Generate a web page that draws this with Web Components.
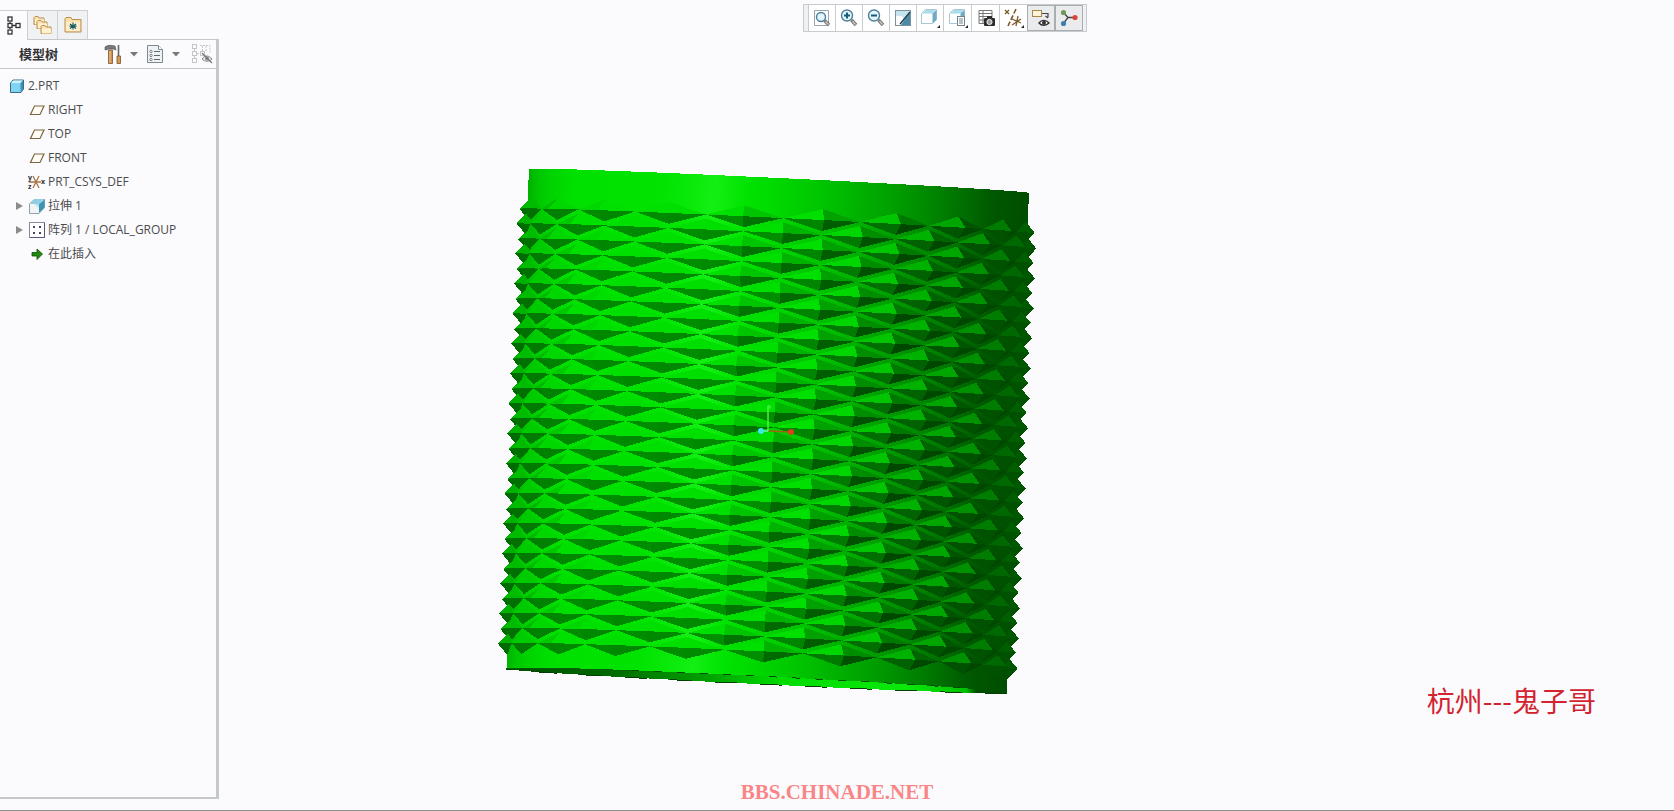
<!DOCTYPE html>
<html lang="zh-CN">
<head>
<meta charset="utf-8">
<title>2.PRT</title>
<style>
html, body { margin: 0; height: 100%; }
body { background: #fbfbfe; color: #4c4c4c; font: 12px/24px "Open Sans", "Noto Sans CJK SC", sans-serif; }
</style>
</head>
<body>
<cad-app>
  <model-panel slot="panel" heading="模型树">
    <tree-node icon="part" root>2.PRT</tree-node>
    <tree-node icon="plane">RIGHT</tree-node>
    <tree-node icon="plane">TOP</tree-node>
    <tree-node icon="plane">FRONT</tree-node>
    <tree-node icon="csys">PRT_CSYS_DEF</tree-node>
    <tree-node icon="extrude" expandable>拉伸 1</tree-node>
    <tree-node icon="pattern" expandable>阵列 1 / LOCAL_GROUP</tree-node>
    <tree-node icon="insert">在此插入</tree-node>
  </model-panel>
  <model-view slot="view">
    <view-toolbar></view-toolbar>
    <span slot="note">杭州---鬼子哥</span>
  </model-view>
  <span slot="mark">BBS.CHINADE.NET</span>
</cad-app>

<script>
const lens = (x, y, r, inner) => `
  <path d="M${x + r - 1} ${y + r - 1}L17 17" stroke="#777" stroke-width="3.4"/>
  <path d="M${x + r} ${y + r}L16.5 16.5" stroke="#d4c3bb" stroke-width="1.4"/>
  <circle cx="${x}" cy="${y}" r="${r}" fill="#e6f5fb" stroke="#4c7f9c" stroke-width="1.4"/>${inner}`;
const smallCube = `<path d="M1.500 5.500L5.500 1.500H16.500V11.500L12.500 15.500H1.500z" fill="#fff" stroke="#a9c6d3"/>
  <path d="M2 5.500L6 2H16L12.500 5.500z" fill="#a9dcec"/><path d="M12.500 5.500L16.500 2V12L12.500 15.500z" fill="#6fabc4"/>`;
const corner = `<path d="M20 17v3h-3z" fill="#222"/>`;
const folder = (x, y) => `<path d="M${x} ${y + 8}V${y + 1}l1-1h3l1 1.500h5V${y + 8}z" fill="#fbe3b4" stroke="#b98d4a"/><path d="M${x + 1} ${y + 3}h9v5h-9z" fill="#fff0cf"/>`;
const ICONS = {
  tree: [18, `<g fill="#fff" stroke="#333" stroke-width="1.300"><path fill="none" d="M5 6v7M7 9.500h5"/><rect x="3" y="1" width="4" height="4"/><rect x="3" y="7.500" width="4" height="4"/><rect x="3" y="14" width="4" height="4"/><rect x="11" y="7.500" width="4" height="4"/></g>`],
  folders: [20, folder(1, 1.5) + folder(4, 5.5) + folder(8, 10.5)],
  favorite: [20, `<path d="M2 17V4l1-1.500h5l1 2h9V17z" fill="#fbe0ad" stroke="#b98d4a"/><path d="M3 7h14v9H3z" fill="#ffecc9"/><path d="M10 7.500v7M7 9l6 4.500M13 9l-6 4.500M6.500 11.200h7" stroke="#1e5f66" stroke-width="1.200"/>`],
  tools: [20, `<path d="M2 3c2-2 6-2 10-1l1 4-3-1H6L2 6z" fill="#74797e" stroke="#4c5054" stroke-width=".6"/><path d="M5.500 6h4v13.500h-4z" fill="#c98f4e" stroke="#7c5429" stroke-width=".8"/><path d="M7 7v12" stroke="#f0c88f"/><path d="M15.500 1v11" stroke="#666" stroke-width="1.600"/><path d="M14 12h3.500v7.500H14z" fill="#d39a56" stroke="#7c5429" stroke-width=".8"/>`],
  list: [20, `<path d="M2.500 1.500h11l4 4v13h-15z" fill="#eef2f4" stroke="#7f8a90"/><path d="M13.500 1.500v4h4" fill="#fff" stroke="#7f8a90"/><path d="M9 7.500h6M9 11.500h6M9 15.500h6" stroke="#5d6a72"/><g fill="#fff" stroke="#5d6a72" stroke-width=".8"><circle cx="6" cy="7.500" r="1.200"/><circle cx="6" cy="11.500" r="1.200"/><circle cx="6" cy="15.500" r="1.200"/></g>`],
  hide: [22, `<g fill="none" stroke="#c3c5c8"><rect x="1.500" y="1.500" width="4" height="4"/><rect x="1.500" y="8.500" width="4" height="4"/><rect x="1.500" y="15.500" width="4" height="4"/><rect x="9.500" y="8.500" width="4" height="4"/><path d="M6 10.500h3M3.500 6v2M3.500 13v2M9 2.500h10v8M11.500 3v5M15 3v5" stroke-dasharray="2 1"/></g><path d="M11 16c2.500-4 7-4 10 0-3 3-7 3-10 0z" fill="#e4e4e6" stroke="#8a8d90"/><circle cx="16" cy="15.500" r="2" fill="#8a8d90"/><path d="M11 10l10 10" stroke="#777" stroke-width="1.200"/>`],
  part: [16, `<path d="M1.500 5L4 2h10.500v9L12 14.500H1.500z" fill="#7fd6f2" stroke="#386c84"/><path d="M2 5L4.500 2.500H14L11.500 5z" fill="#d3f3fc"/><path d="M11.500 5L14 2.500V11l-2.500 3z" fill="#3f90b4"/>`],
  plane: [16, `<path d="M5.500 4h9.500l-4 8.500H1.500z" fill="#fffdf6" stroke="#7c6540" stroke-width="1.200"/>`],
  csys: [20, `<path d="M2 10h12M6 4l6 12M12 4L6 16" stroke="#a8754a" stroke-width="1.300"/><g font-family="Open Sans" font-size="7" font-weight="700" fill="#333"><text x="1" y="8">y</text><text x="14" y="12">x</text><text x="1" y="17">z</text></g>`],
  extrude: [18, `<path d="M1.500 7L6 2.500h10.500v8L11 16.500H1.500z" fill="#f0f4f6" stroke="#8fa3ad"/><path d="M2 7L6.500 2H16l-5 5z" fill="#8fcfe6"/><path d="M11 7l5.500-4.500v8L11 16z" fill="#3f93b6"/><path d="M6 7h5v4z" fill="#b9e2f0"/>`],
  pattern: [18, `<rect x="1.500" y="1.500" width="15" height="15" fill="#fff" stroke="#8d88a0"/><path d="M16.500 2v14.500H2" stroke="#5d5377"/><g fill="#4c3f6d"><path d="M5 5h2v2H5zM11 5h2v2h-2zM5 11h2v2H5zM11 11h2v2h-2z"/></g>`],
  insert: [16, `<path d="M3 6.500h5V3l5.500 5L8 13.500V10H3z" fill="#1f8a0b" stroke="#0d4d05" stroke-width=".8"/>`],
  fit: [20, `<path d="M2.500 2.500h14v15h-14z" fill="#fff" stroke="#9aa4a9"/>` + lens(9, 9, 4.5, '')],
  zoomin: [20, lens(8, 7.5, 5.5, `<path d="M8 4.500v6M5 7.500h6" stroke="#155d80" stroke-width="2"/>`)],
  zoomout: [20, lens(8, 7.5, 5.5, `<path d="M5 7.500h6" stroke="#155d80" stroke-width="2"/>`)],
  repaint: [20, `<rect x="2.500" y="2.500" width="15" height="15" fill="#dfeff5" stroke="#7a929d"/><path d="M3 3h14v2L8 17H3z" fill="#c6e3ee"/><path d="M3 8c4-1 7 0 8 3l-4 6H3z" fill="#fff"/><path d="M17 4v13H8z" fill="#4d8aa6"/><path d="M7 16l10-12" stroke="#173c50" stroke-width="1.300"/>`],
  shade: [20, smallCube + corner],
  saved: [20, smallCube + `<rect x="9.500" y="8.500" width="7" height="9" fill="#fff" stroke="#71838c"/><path d="M11 11h4M11 13h4M11 15h4" stroke="#71838c"/>` + corner],
  manager: [20, `<path d="M3 2.500h13v13H3zM3 5.500h13M3 8.500h13M3 12h13M7 3v12" fill="#fff" stroke="#777"/><rect x="8" y="10" width="11" height="8" rx="1" fill="#2e2e2e"/><rect x="11" y="8" width="5" height="3" fill="#2e2e2e"/><circle cx="13.500" cy="14" r="2.600" fill="#9ca3a8" stroke="#eee"/>`],
  datum: [20, `<path d="M1 2l4 4M5 2L1 6" stroke="#7c5a2c" stroke-width="1.300"/><path d="M12 1L4 18" stroke="#7c5a2c" stroke-width="1.600" stroke-dasharray="5 2"/><path d="M8 11l9 4M14 8l-2 10M8 17l9-6" stroke="#7c5a2c" stroke-width="1.300"/>` + corner],
  annotation: [20, `<rect x="1.500" y="2.500" width="9" height="6" fill="#fff3d6" stroke="#a98650"/><path d="M11 5.500h6v4M14.500 8l2.500 2" fill="none" stroke="#444" stroke-width="1.200"/><path d="M8 15c2.500-3.500 7-3.500 10 0-3 3-7.500 3-10 0z" fill="#fff" stroke="#333" stroke-width="1.400"/><circle cx="13" cy="14.800" r="2" fill="#333"/>`],
  spin: [20, `<path d="M4 4l5 5.500h7M9 9.500L4 16" fill="none" stroke="#444" stroke-width="1.300"/><circle cx="4.500" cy="4.500" r="2.600" fill="#6d9b58"/><circle cx="16" cy="9.500" r="2.600" fill="#d8453d"/><circle cx="4.500" cy="15.500" r="2.600" fill="#3e7fae"/>`],
  caret: [10, `<path d="M1 3h8L5 7.500z" fill="#777"/>`],
  arrow: [10, `<path d="M2 1v8l7-4z" fill="#8c8c8c"/>`]
};

const attach = (el, html) => { el.attachShadow({ mode: 'open' }).innerHTML = html; return el.shadowRoot; };
const buttonReset = `button { border: 0; margin: 0; padding: 0; background: none; font: inherit; color: inherit; display: flex; align-items: center; justify-content: center; }`;

class CadIcon extends HTMLElement {
  connectedCallback() {
    const [size, art] = ICONS[this.getAttribute('name')];
    attach(this, `<style>:host { display: block; flex: none; } svg { display: block; overflow: visible; }</style>
      <svg width="${size}" height="${size}" viewBox="0 0 ${size} ${size}" fill="none" aria-hidden="true">${art}</svg>`);
  }
}

class CadApp extends HTMLElement {
  connectedCallback() {
    attach(this, `<style>
      :host { display: grid; grid-template-columns: 219px 1fr; height: 100vh; min-height: 400px; box-sizing: border-box; border-bottom: 1px solid #909090; position: relative; overflow: hidden; }
      .mark { position: absolute; left: 0; right: 0; bottom: 6px; text-align: center; color: #f98686; font: bold 21px/24px "Liberation Serif", serif; pointer-events: none; }
      </style><slot name="panel"></slot><slot name="view"></slot><div class="mark"><slot name="mark"></slot></div>`);
  }
}

class ModelPanel extends HTMLElement {
  connectedCallback() {
    attach(this, `<style>${buttonReset}
      :host { display: flex; flex-direction: column; padding-top: 10px; margin-bottom: 11px; min-height: 0; }
      .tabs { display: flex; height: 29px; }
      .tabs button { width: 30px; box-sizing: border-box; background: #eff1f2; border: 1px solid #cdd1d3; border-left: 0; border-bottom: 0; }
      .tabs button:first-child { width: 28px; background: #fbfbfe; }
      .frame { flex: 1; display: flex; flex-direction: column; border: solid #c4c8cb; border-width: 1px 3px 2px 0; position: relative; }
      .frame::before { content: ""; position: absolute; left: 0; top: -1px; width: 27px; height: 1px; background: #fbfbfe; }
      header { display: flex; align-items: center; height: 28px; padding-left: 19px; border-bottom: 1px solid #c4c8cb; }
      h2 { flex: 1; margin: 0; font-size: 13px; line-height: 24px; font-weight: 700; color: #333; }
      header button { height: 24px; }
      .caret { width: 22px; }
      .last { padding: 0 3px 0 4px; }
      .tree { padding-top: 5px; }
      </style>
      <div class="tabs" role="tablist">
        <button role="tab" aria-label="tree" aria-selected="true"><cad-icon name="tree"></cad-icon></button>
        <button role="tab" aria-label="folders"><cad-icon name="folders"></cad-icon></button>
        <button role="tab" aria-label="favorites"><cad-icon name="favorite"></cad-icon></button>
      </div>
      <div class="frame">
        <header><h2>${this.getAttribute('heading')}</h2>
          <button aria-label="settings"><cad-icon name="tools"></cad-icon></button><button class="caret" aria-label="settings menu"><cad-icon name="caret"></cad-icon></button>
          <button aria-label="show"><cad-icon name="list"></cad-icon></button><button class="caret" aria-label="show menu"><cad-icon name="caret"></cad-icon></button>
          <button class="last" aria-label="hide"><cad-icon name="hide"></cad-icon></button>
        </header>
        <div class="tree" role="tree"><slot></slot></div>
      </div>`);
  }
}

class TreeNode extends HTMLElement {
  connectedCallback() {
    this.setAttribute('role', 'treeitem');
    const toggle = this.hasAttribute('expandable') ? '<button aria-label="expand"><cad-icon name="arrow"></cad-icon></button>' : '';
    attach(this, `<style>${buttonReset}
      :host { display: flex; align-items: center; height: 24px; white-space: nowrap; }
      .toggle { width: 13px; padding-left: 14px; }
      :host([root]) .toggle { width: 0; padding-left: 9px; }
      .icon { width: 20px; margin-right: 1px; display: flex; justify-content: center; }
      :host([root]) .icon { width: 16px; margin-right: 3px; }
      </style><div class="toggle">${toggle}</div><div class="icon"><cad-icon name="${this.getAttribute('icon')}"></cad-icon></div><slot></slot>`);
  }
}

class ViewToolbar extends HTMLElement {
  connectedCallback() {
    const names = ['fit', 'zoomin', 'zoomout', 'repaint', 'shade', 'saved', 'manager', 'datum', 'annotation', 'spin'];
    attach(this, `<style>${buttonReset}
      :host { display: flex; height: 26px; border: 1px solid #c9cccf; background: #eff0f4; padding: 0 3px 0 4px; }
      button { width: 27px; box-sizing: border-box; border-left: 1px solid #c9cccf; background: #fff; }
      button:nth-of-type(n+6) { width: 28px; }
      button[aria-pressed=true] { border: 1px solid #a9adb1; background: #e9ebed; }
      </style>` + names.map((n, i) => `<button aria-label="${n}" aria-pressed="${i > 7}"><cad-icon name="${n}"></cad-icon></button>`).join(''));
    this.setAttribute('role', 'toolbar');
  }
}

/* Knurled cylinder: two interleaved sets of pyramids wrapped on a leaning barrel. */
class KnurledPart extends HTMLElement {
  connectedCallback() {
    const R = 250, H = 10, RAD = Math.PI / 180;
    const project = (deg, z, r = R) => {
      const s = Math.sin(deg * RAD), c = Math.cos(deg * RAD);
      const dx = r * s;
      return [560 - .045 * z + dx, 181 + z + .048 * dx - (3 + z / 250) * c];
    };
    const STOPS = [[-110, .68], [-85, .7], [-70, .8], [-55, .88], [-28, .89], [-19, .92], [-15, .94], [-9, .9], [-2, .86], [10, .77], [30, .6], [47, .44], [58, .35], [75, .31], [120, .3]];
    const band = a => {
      for (let i = 1; i < STOPS.length; i++) if (a <= STOPS[i][0]) {
        const [a0, v0] = STOPS[i - 1], [a1, v1] = STOPS[i];
        return v0 + (v1 - v0) * Math.max(0, a - a0) / (a1 - a0);
      }
      return .3;
    };
    const colour = v => { const g = Math.round(255 * Math.min(.95, v)), w = Math.max(0, Math.round((v - .89) * 400)); return `rgb(${w},${g},${w})`; };
    const pts = a => a.map(p => p.map(n => Math.round(n * 10) / 10).join()).join(' ');
    const poly = (a, fill) => `<polygon points="${pts(a)}" fill="${fill}"/>`;
    let art = '';
    const arc = (z, from = -90, to = 90) => { const a = []; const d = to > from ? 5 : -5; for (let t = from; d > 0 ? t <= to : t >= to; t += d) a.push(project(t, z)); return a; };

    const far = []; for (let t = 90; t >= -90; t -= 5) { const p = project(t, 500); far.push([p[0], p[1] + 8 * Math.cos(t * RAD)]); }
    art += `<polygon points="${pts([...arc(500), ...far])}" fill="url(#rim)"/>`;
    art += `<polyline points="${pts(far)}" fill="none" stroke="#043f04" stroke-dasharray="22 23"/>`;
    art += `<polygon points="${pts([...arc(0), ...arc(500, 90, -90)])}" fill="url(#barrel)"/>`;
    art += `<polyline points="${pts(arc(500, -30, 60))}" fill="none" stroke="#064806" stroke-dasharray="8 15"/>`;
    art += `<polyline points="${pts(arc(500, -90, -30))}" fill="none" stroke="#036003"/>`;

    const cells = [];
    for (let row = 0; row < 30; row++) {
      const offset = row % 2 ? 1.4 : 10.4;
      for (let k = -6; k <= 5; k++) { const t = offset + 18 * k; if (Math.abs(t) < 102) cells.push([t, 40 + 15 * row]); }
    }
    cells.sort((a, b) => Math.abs(b[0]) - Math.abs(a[0]));
    for (const [t, z] of cells) {
      const L = project(t - 9, z), Rt = project(t + 9, z), T = project(t, z - 11), B = project(t, z + 11), A = project(t, z, R + H);
      const left = t < -12;
      const faces = [
        [[L, T, A], Math.min(.88, band(t - 19) + (t > 40 ? .03 : 0))],
        [[T, Rt, A], left ? Math.min(.88, band(t)) : band(t + 13) * .96],
        [[L, A, B], Math.max(.32, Math.min(.56, band(t - 10) * .62))],
        [[A, Rt, B], left ? Math.min(.54, band(t) * .6) : Math.max(.28, band(t + 16) * .58)]
      ];
      for (const [f, v] of faces) {
        const area = (f[1][0] - f[0][0]) * (f[2][1] - f[0][1]) - (f[2][0] - f[0][0]) * (f[1][1] - f[0][1]);
        if (area > 0) art += poly(f, colour(v));
      }
    }
    const stops = []; for (let i = 0; i <= 48; i++) { const x = i / 24 - 1; stops.push(`<stop offset="${i / 48}" stop-color="${colour(band(Math.asin(x) / RAD))}"/>`); }
    attach(this, `<style>:host { display: block; } svg { display: block; }</style>
      <svg width="900" height="760" role="img" aria-label="2.PRT">
      <defs><linearGradient id="barrel" gradientUnits="userSpaceOnUse" x1="310" y1="169" x2="810" y2="193">${stops.join('')}</linearGradient>
      <linearGradient id="rim" gradientUnits="userSpaceOnUse" x1="288" y1="0" x2="787" y2="0"><stop offset="0" stop-color="#004c00"/><stop offset=".2" stop-color="#006800"/><stop offset=".4" stop-color="#00a000"/><stop offset=".55" stop-color="#00dc00"/><stop offset=".8" stop-color="#0be80b"/><stop offset=".92" stop-color="#00c000"/><stop offset=".94" stop-color="#004c00"/></linearGradient></defs>
      <g shape-rendering="crispEdges">${art}</g>
      <path d="M549 431v-24" stroke="#66f04c" stroke-width="1.300" fill="none"/><circle cx="550" cy="407" r="2" fill="#35ef35"/>
      <path d="M550 431l22 1" stroke="#a06414" stroke-width="1.500"/><circle cx="572" cy="432" r="3" fill="#d8431c"/>
      <path d="M542 431h7" stroke="#9ff" stroke-width="1"/><circle cx="542" cy="431" r="3" fill="#3fe6ea"/>
      </svg>`);
  }
}

class ModelView extends HTMLElement {
  connectedCallback() {
    attach(this, `<style>
      :host { display: flex; flex-direction: column; align-items: center; padding: 4px 3px 0 0; position: relative; overflow: hidden; min-width: 0; }
      knurled-part { position: absolute; left: 0; top: 0; }
      ::slotted(view-toolbar) { position: relative; }
      .note { position: absolute; right: 78px; bottom: 92px; color: #d2232f; font: 28px/36px "Noto Sans CJK SC", sans-serif; white-space: nowrap; }
      </style><knurled-part></knurled-part><slot></slot><div class="note"><slot name="note"></slot></div>`);
  }
}

customElements.define('cad-icon', CadIcon);
customElements.define('knurled-part', KnurledPart);
customElements.define('view-toolbar', ViewToolbar);
customElements.define('tree-node', TreeNode);
customElements.define('model-panel', ModelPanel);
customElements.define('model-view', ModelView);
customElements.define('cad-app', CadApp);
</script>
</body>
</html>
